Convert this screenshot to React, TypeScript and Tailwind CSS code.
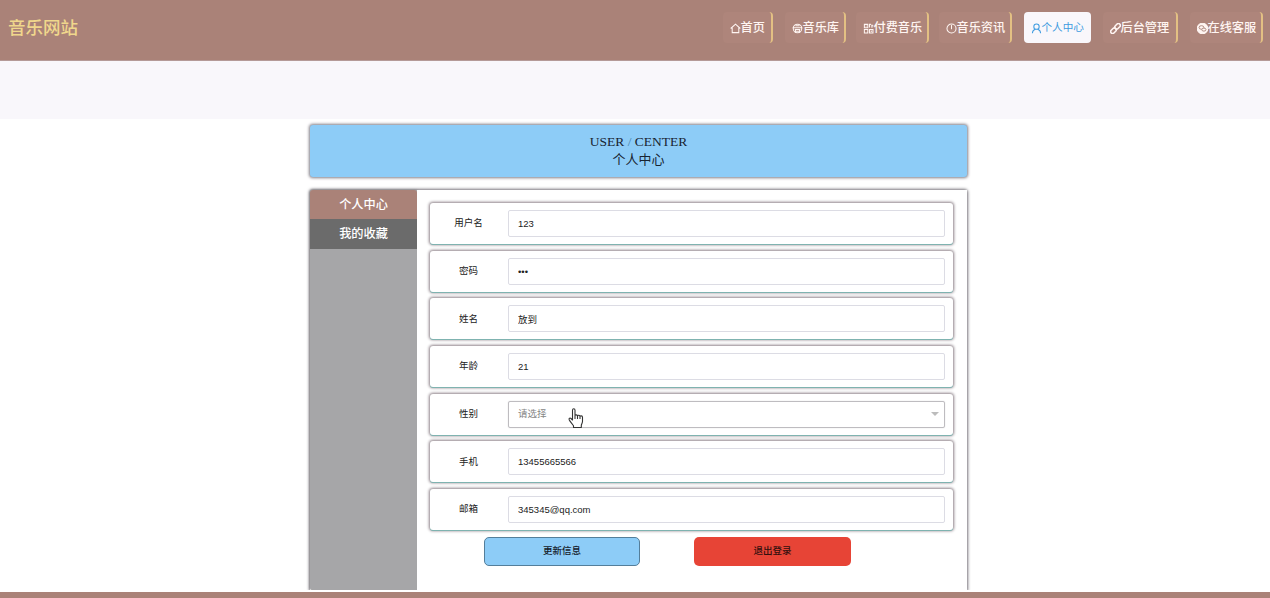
import { useState } from "react";
import type { ReactNode } from "react";
import clsx from "clsx";

type NavItem = {
  label: string;
  box: string;
  icon: ReactNode;
};

const navItems: NavItem[] = [
  {
    label: "首页",
    box: "w-[50px] mr-3",
    icon: <path d="M1 8 8 1.8 15 8M3.2 7v7h9.6V7" />,
  },
  {
    label: "音乐库",
    box: "w-[61px] mr-[10px]",
    icon: (
      <>
        <circle cx="8" cy="8" r="6.2" />
        <path d="M1 7h14M4 9.5h8M5 4h6M5 9v5M11 9v5M5 12h6" />
      </>
    ),
  },
  {
    label: "付费音乐",
    box: "w-[73px] mr-[10px]",
    icon: <path d="M2 2h5v5H2zM2 9.5h5v5H2zM9.5 9.5h5v5h-5zM9.5 6.5V2h2M12 4h3M13 2v5M4.5 4v1M12 11v2" />,
  },
  {
    label: "音乐资讯",
    box: "w-[73px] mr-3",
    icon: (
      <>
        <circle cx="8" cy="8" r="6.6" />
        <path d="M8 3v6" />
      </>
    ),
  },
  {
    label: "个人中心",
    box: "w-[67px] mr-3",
    icon: (
      <>
        <circle cx="8" cy="5.3" r="3.9" />
        <path d="M2 15c.2-3.5 1.8-5 4.2-5.8M14 15c-.2-3.5-1.8-5-4.2-5.8" />
      </>
    ),
  },
  {
    label: "后台管理",
    box: "w-[75px] mr-3",
    icon: (
      <>
        <rect x="6.5" y="2" width="9" height="5.5" rx="2.7" transform="rotate(-45 11 4.75)" strokeWidth="2.3" />
        <rect x=".5" y="8.5" width="9" height="5.5" rx="2.7" transform="rotate(-45 5 11.25)" strokeWidth="2.3" />
      </>
    ),
  },
  {
    label: "在线客服",
    box: "w-[73px]",
    icon: (
      <>
        <circle cx="8" cy="8" r="7.6" fill="currentColor" />
        <ellipse cx="6.5" cy="6.5" rx="3.5" ry="2.6" stroke="#aa8278" strokeWidth="1.3" />
        <ellipse cx="10" cy="9.6" rx="3" ry="2.2" fill="currentColor" stroke="#aa8278" strokeWidth="1.3" />
      </>
    ),
  },
];

const fields = [
  { label: "用户名", value: "123", type: "text" },
  { label: "密码", value: "123", type: "password" },
  { label: "姓名", value: "放到", type: "text" },
  { label: "年龄", value: "21", type: "text" },
  { label: "性别", value: "", type: "select" },
  { label: "手机", value: "13455665566", type: "text" },
  { label: "邮箱", value: "345345@qq.com", type: "text" },
];

function Header() {
  const [active, setActive] = useState("个人中心");

  return (
    <header className="flex h-[61px] shrink-0 items-start justify-between border-b border-[#b59a98] bg-[#aa8278] pr-[7px] pl-2">
      <h1 className="pt-4 text-[17.5px] leading-[25px] font-medium text-[#f0d78c]">音乐网站</h1>
      <nav className="flex pt-3">
        {navItems.map((item) => (
          <button
            key={item.label}
            type="button"
            onClick={() => setActive(item.label)}
            className={clsx(
              "flex h-[31px] items-center justify-start rounded-[4px] pt-px pl-[6.5px] whitespace-nowrap",
              item.box,
              active === item.label
                ? "bg-[#f9f7fb] text-[10.6px] text-[#3d9be0]"
                : "border-r-2 border-[#e3c083] bg-[#ae857b] text-[12.2px] font-medium text-[#fff5f2]",
            )}
          >
            <svg viewBox="0 0 16 16" className="h-[11px] w-[11px] shrink-0" fill="none" stroke="currentColor" strokeWidth="1.5">
              {item.icon}
            </svg>
            {item.label}
          </button>
        ))}
      </nav>
    </header>
  );
}

function Field({ label, value, type }: { label: string; value: string; type: string }) {
  const [text, setText] = useState(value);

  return (
    <label className="flex h-[41px] items-center rounded-[3px] bg-white pr-2 shadow-[0_1px_0_#7fb3b0,0_0_3px_1px_#8d8188]">
      <span className="w-[77px] shrink-0 text-center text-[9.5px] text-[#222]">{label}</span>
      {type === "select" ? (
        <span className="ml-px flex h-[27px] flex-1 items-center justify-between rounded-[2px] border border-[#bebcc0] pr-[5px] pl-[9px] text-[9.5px] text-[#858585] shadow-[0_0_1px_#bebcc0]">
          请选择
          <span className="border-x-[4px] border-t-[4px] border-x-transparent border-t-[#bcbcbc]" />
        </span>
      ) : (
        <input
          type={type}
          value={text}
          onChange={(e) => setText(e.target.value)}
          className="ml-px h-[27px] min-w-0 flex-1 rounded-[2px] border border-[#dcdce4] bg-white px-[9px] text-[9.5px] text-[#222] outline-none"
        />
      )}
    </label>
  );
}

export default function App() {
  return (
    <div className="relative flex h-[598px] w-[1270px] flex-col overflow-hidden bg-white font-['Liberation_Sans','Noto_Sans_CJK_SC',sans-serif]">
      <Header />
      <div className="h-[58px] shrink-0 bg-[#f9f7fb]" />

      <main className="ml-[310px] w-[657px] flex-1 pt-[6px]">
        {/* Page title */}
        <section className="flex h-[52px] flex-col items-center justify-center rounded-[3px] bg-[#8dccf7] font-['Liberation_Serif','Noto_Sans_CJK_SC',serif] text-[13.5px] leading-[18px] text-[#182431] shadow-[0_0_3px_1px_#817e87]">
          <p>
            USER <span className="text-[#4682ac]">/</span> CENTER
          </p>
          <p className="text-[13px]">个人中心</p>
        </section>

        <section className="mt-[13px] flex h-[400px] rounded-t-[3px] shadow-[0_0_3px_1px_#77737a]">
          <aside className="w-[107px] shrink-0 rounded-l-[3px] bg-[#a6a6a8] text-center text-[12.2px] leading-[30px] font-medium text-white shadow-[0_0_2px_#777]">
            <div className="h-[29px] rounded-t-[3px] bg-[#aa8278]">个人中心</div>
            <div className="h-[30px] bg-[#6b6b6b]">我的收藏</div>
          </aside>

          <form className="flex-1 bg-white pt-[13px] pr-[14px] pl-[13px]" onSubmit={(e) => e.preventDefault()}>
            <div className="flex flex-col gap-[6.65px]">
              {fields.map((field) => (
                <Field key={field.label} {...field} />
              ))}
            </div>
            <div className="mt-[7px] flex gap-[54px] pl-[54px] text-[9.5px] font-medium">
              <button type="submit" className="h-[29px] w-[156px] rounded-[5px] border border-[#547e9a] bg-[#8dccf7] text-[#15202b]">
                更新信息
              </button>
              <button type="button" className="h-[29px] w-[157px] rounded-[5px] bg-[#e74436] text-[#32100e]">
                退出登录
              </button>
            </div>
          </form>
        </section>
      </main>

      <footer className="relative h-[6px] shrink-0 bg-[#aa8278] shadow-[0_-2px_0_#fff]" />

      {/* Hand pointer */}
      <svg viewBox="0 0 16 21" className="pointer-events-none absolute top-[408px] left-[568px] h-[21px] w-4" fill="#fff" stroke="#333" strokeWidth="1.1" strokeLinejoin="round">
        <path d="M4.5 12V2.3c0-2 2.5-2 2.5 0V8c0-1.5 2.5-1.5 2.5.3 0-1.5 2.5-1.3 2.5.4 0-1.3 2.5-1.2 2.5.6v4.2c0 1.6-1.2 2.6-1.2 3.9v2.1H5.5v-1.7C4.3 15.800 2 13.500 1.200 11.700c-.6-1.500.9-2.100 1.800-1.200zM7 8v3M9.500 8.300V11M12 8.700V11" />
      </svg>
    </div>
  );
}
